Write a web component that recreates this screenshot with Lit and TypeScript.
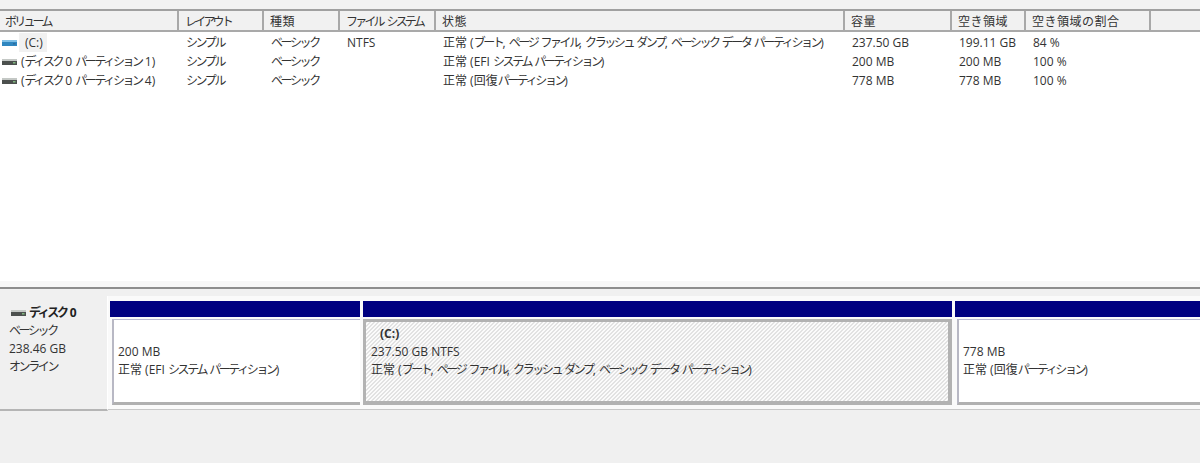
import { LitElement, html, css, svg } from "lit";
import { customElement } from "lit/decorators.js";

const COLS = [179, 85, 76, 96, 409, 107, 74, 125, 49];
const HEAD = ["ボリューム", "レイアウト", "種類", "ファイル システム", "状態", "容量", "空き領域", "空き領域の割合", ""];
const ROWS = [
  { icon: "blue", vol: "(C:)", c: ["シンプル", "ベーシック", "NTFS", "正常 (ブート, ページ ファイル, クラッシュ ダンプ, ベーシック データ パーティション)", "237.50 GB", "199.11 GB", "84 %"] },
  { icon: "gray", vol: "(ディスク 0 パーティション 1)", c: ["シンプル", "ベーシック", "", "正常 (EFI システム パーティション)", "200 MB", "200 MB", "100 %"] },
  { icon: "gray", vol: "(ディスク 0 パーティション 4)", c: ["シンプル", "ベーシック", "", "正常 (回復パーティション)", "778 MB", "778 MB", "100 %"] },
];

// Katakana is set narrower than kanji in the original UI font.
const jp = (t: string) =>
  t.split(/([\u30a0-\u30ff]+)/).map((p, i) => (i % 2 ? html`<span class="kana">${p}</span>` : p));

const diskIcon = (kind: string) => {
  const body = kind === "blue" ? "#2f86c0" : "#4c504e";
  const top = kind === "blue" ? "#7fbfe6" : "#c4c8c5";
  const led = kind === "blue" ? "#2a6d9e" : "#7fb57f";
  return svg`<svg class="ic" width="15" height="6" viewBox="0 0 15 6">
    <rect x="0" y="0" width="15" height="2" fill="${top}"/>
    <rect x="0" y="2" width="15" height="4" fill="${body}"/>
    <rect x="11" y="3" width="2.5" height="1.5" fill="${led}"/>
  </svg>`;
};

@customElement("app-root")
export class AppRoot extends LitElement {
  static styles = css`
    :host {
      display: flex;
      flex-direction: column;
      width: 1200px;
      height: 463px;
      overflow: hidden;
      background: #f0f0f0;
      color: #333;
      font-family: "Open Sans", "Noto Sans CJK JP", sans-serif;
      font-size: 12px;
    }
    .kana { letter-spacing: -2.4px; }
    .top { height: 9px; background: #f2f2f2; flex: none; }
    .pane { height: 270px; flex: none; background: #fff; border-top: 2px solid #a0a0a0; display: flex; flex-direction: column; }
    .head { display: flex; height: 19px; background: #f1f1f1; border-bottom: 2px solid #a9a9a9; flex: none; }
    .hc { box-sizing: border-box; padding-left: 6px; line-height: 21px; letter-spacing: 0.5px; border-right: 2px solid #a8a8a8; white-space: nowrap; overflow: hidden; }
    .hc:first-child { padding-left: 5px; }
    .hc:last-child { border-right: none; }
    .hc .kana { letter-spacing: -2.8px; }
    .rows { padding-top: 1px; }
    .row { display: flex; height: 19px; line-height: 19px; }
    .c { box-sizing: border-box; padding-left: 7px; white-space: nowrap; flex: none; }
    .vol { display: flex; align-items: center; padding-left: 2px; }
    .ic { flex: none; }
    .name { margin-left: 4px; }
    .name.sel { background: #f1f1f1; padding: 0 4px 0 6px; margin-left: 2px; }
    .gap { height: 6px; background: #f7f7f7; flex: none; }
    .split { height: 2px; background: #8d8d8d; flex: none; }
    .disk { display: flex; padding-top: 7px; flex: none; align-items: flex-start; }
    .label { box-sizing: border-box; width: 108px; height: 115px; flex: none; padding: 8px 0 0 9px; background: #f0f0f0; border-right: 1px solid #fff; border-bottom: 2px solid #b5b5b5; line-height: 18px; }
    .title { display: flex; align-items: center; gap: 3px; font-weight: 700; margin-left: 2px; color: #222; }
    .parts { display: flex; flex: 1; padding: 5px 0 0 2px; height: 108px; gap: 3px; background: #fafafa; border-bottom: 1px solid #c8c8c8; }
    .part { flex: none; display: flex; flex-direction: column; }
    .bar { height: 16px; background: #000080; flex: none; }
    .box { box-sizing: border-box; margin-top: 2px; height: 86px; line-height: 18px; background: #fff; border-left: 2px solid #b8b8c4; border-top: 1px solid #b8b8d0; border-bottom: 3px solid #b0b0b0; padding: 23px 0 0 4px; margin-left: 2px; }
    .box.c-drive { margin-left: 0; padding: 3px 0 0 5px; border: 3px solid #b2b2b2; border-right-width: 4px; border-bottom-width: 4px;
      background: repeating-linear-gradient(135deg, #e2e2e2 0, #e2e2e2 0.9px, #fbfbfb 1.1px, #fbfbfb 2.828px); }
    .cname { font-weight: 700; padding-left: 9px; }
    .rest { flex: 1; }
  `;

  render() {
    return html`
      <div class="top"></div>
      <div class="pane">
        <div class="head">
          ${HEAD.map((h, i) => html`<div class="hc" style="width:${COLS[i]}px">${jp(h)}</div>`)}
        </div>
        <div class="rows">
          ${ROWS.map((r, ri) => html`
            <div class="row">
              <div class="c vol" style="width:${COLS[0]}px">
                ${diskIcon(r.icon)}
                <span class="name ${ri === 0 ? "sel" : ""}">${jp(r.vol)}</span>
              </div>
              ${r.c.map((t, i) => html`<div class="c" style="width:${COLS[i + 1]}px">${jp(t)}</div>`)}
            </div>`)}
        </div>
      </div>
      <div class="gap"></div>
      <div class="split"></div>
      <div class="disk">
        <div class="label">
          <div class="title">${diskIcon("gray")}<span>${jp("ディスク 0")}</span></div>
          <div>${jp("ベーシック")}</div>
          <div>238.46 GB</div>
          <div>${jp("オンライン")}</div>
        </div>
        <div class="parts">
          <div class="part" style="width:250px">
            <div class="bar"></div>
            <div class="box"><div>200 MB</div><div>${jp("正常 (EFI システム パーティション)")}</div></div>
          </div>
          <div class="part" style="width:589px">
            <div class="bar"></div>
            <div class="box c-drive"><div class="cname">(C:)</div><div>237.50 GB NTFS</div><div>${jp("正常 (ブート, ページ ファイル, クラッシュ ダンプ, ベーシック データ パーティション)")}</div></div>
          </div>
          <div class="part" style="width:245px">
            <div class="bar"></div>
            <div class="box"><div>778 MB</div><div>${jp("正常 (回復パーティション)")}</div></div>
          </div>
        </div>
      </div>
      <div class="rest"></div>
    `;
  }
}
